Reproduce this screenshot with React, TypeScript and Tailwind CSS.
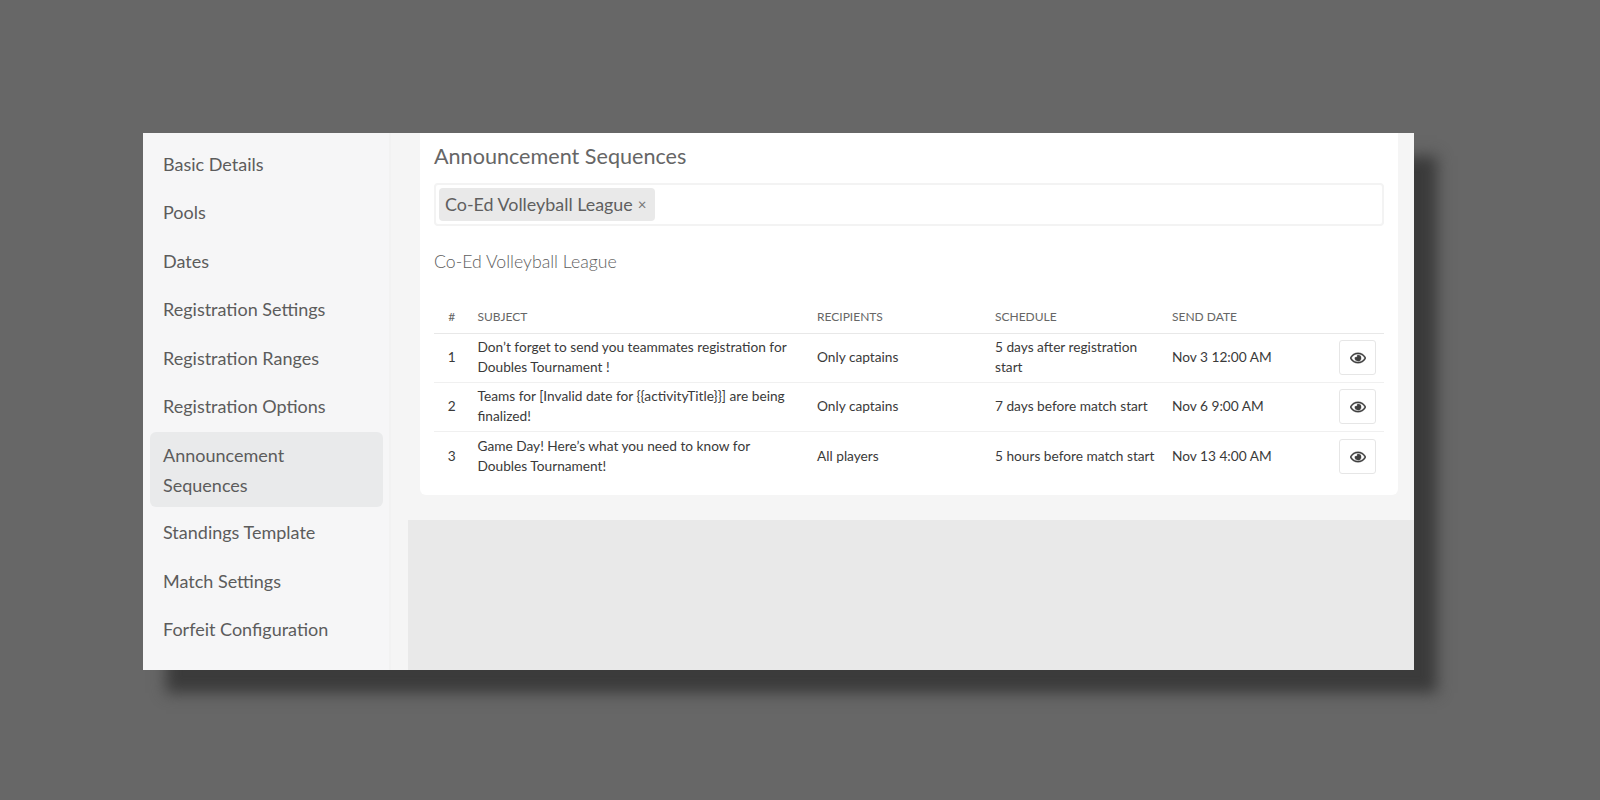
import { FaRegEye } from "react-icons/fa";

const menu = [
  "Basic Details",
  "Pools",
  "Dates",
  "Registration Settings",
  "Registration Ranges",
  "Registration Options",
  "Announcement Sequences",
  "Standings Template",
  "Match Settings",
  "Forfeit Configuration",
];

const rows = [
  {
    id: 1,
    subject: "Don’t forget to send you teammates registration for Doubles Tournament !",
    recipients: "Only captains",
    schedule: "5 days after registration start",
    date: "Nov 3 12:00 AM",
    height: "h-[49px]",
  },
  {
    id: 2,
    subject: "Teams for [Invalid date for {{activityTitle}}] are being finalized!",
    recipients: "Only captains",
    schedule: "7 days before match start",
    date: "Nov 6 9:00 AM",
    height: "h-[49px]",
  },
  {
    id: 3,
    subject: "Game Day! Here’s what you need to know for Doubles Tournament!",
    recipients: "All players",
    schedule: "5 hours before match start",
    date: "Nov 13 4:00 AM",
    height: "h-[50px]",
  },
];

const columns = "grid grid-cols-[43.5px_339.5px_178px_177px_167px_1fr]";

export default function App() {
  return (
    <div className="w-[1600px] h-[800px] bg-[#676767] pt-[133px] pl-[143px] overflow-hidden font-['Lato',sans-serif]">
      <div className="w-[1271px] h-[537px] flex overflow-hidden shadow-[23px_23px_14px_#3b3b3b] bg-[#f5f5f5]">
        <div className="w-[246px] pt-[7px] pl-[7px] pr-[6px] bg-[#f6f6f7] flex flex-col gap-[1.5px] shrink-0">
          {menu.map((item) => (
            <div
              key={item}
              className={
                item === "Announcement Sequences"
                  ? "px-[13px] py-[7.5px] mt-[1px] text-[18px] leading-[30px] text-[#5c5c5c] bg-[#e9eaeb] rounded-[6px]"
                  : "px-[13px] py-[8.5px] text-[18px] leading-[30px] text-[#5c5c5c]"
              }
            >
              {item}
            </div>
          ))}
        </div>
        <div className="flex-1 flex flex-col border-l-[2px] border-[#f2f2f2] bg-[#f5f5f5]">
          <div className="h-[387px] shrink-0 pl-[29px] pr-[16px]">
            <div className="h-[362px] bg-white rounded-b-[6px] px-[14px]">
              <h2 className="text-[21.6px] leading-[30px] pt-[8px] h-[50px] text-[#666666] font-normal">
                Announcement Sequences
              </h2>
              <div className="h-[43px] border-[2px] border-[#f3f3f3] rounded-[4px] pl-[3px] flex items-center">
                <span className="h-[33px] pl-[6px] pr-[8px] flex items-center gap-[5px] bg-[#e9e9e9] rounded-[4px] text-[17.9px] text-[#5f5f5f]">
                  Co-Ed Volleyball League
                  <span className="text-[15px] text-[#777777]">×</span>
                </span>
              </div>
              <div className="mt-[21px] text-[17.7px] leading-[30px] font-light text-[#5e5e5e]">
                Co-Ed Volleyball League
              </div>
              <div className={`${columns} mt-[25px] h-[32px] pb-[2px] items-center border-b border-[#e8e8e8] text-[12px] text-[#666666]`}>
                <div className="text-center pr-[8px]">#</div>
                <div>SUBJECT</div>
                <div>RECIPIENTS</div>
                <div>SCHEDULE</div>
                <div>SEND DATE</div>
                <div />
              </div>
              {rows.map((row) => (
                <div
                  key={row.id}
                  className={`${columns} ${row.height} pb-[2px] items-center border-b border-[#f0f0f0] last:border-b-0 text-[13.7px] leading-[20px] text-[#3a3a3a]`}
                >
                  <div className="text-center pr-[8px]">{row.id}</div>
                  <div className="pr-[19px]">{row.subject}</div>
                  <div>{row.recipients}</div>
                  <div className="pr-[12px]">{row.schedule}</div>
                  <div>{row.date}</div>
                  <div className="flex justify-end pr-[8px] pt-[1px]">
                    <button className="w-[37px] h-[35px] flex items-center justify-center bg-white border border-[#e6e6e6] rounded-[3px] text-[#3f3f3f]">
                      <FaRegEye className="text-[16px]" stroke="currentColor" strokeWidth={12} />
                    </button>
                  </div>
                </div>
              ))}
            </div>
          </div>
          <div className="flex-1 ml-[17px] bg-[#e9e9e9]" />
        </div>
      </div>
    </div>
  );
}
